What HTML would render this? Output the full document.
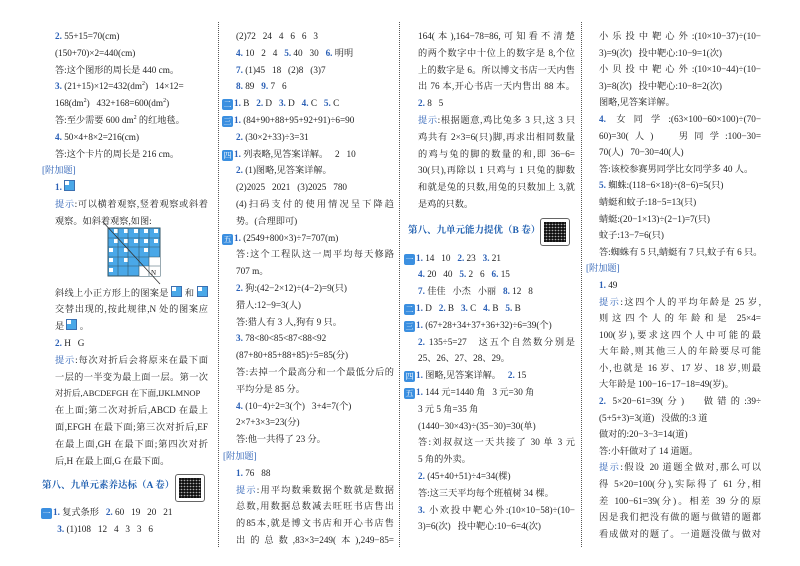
<!DOCTYPE html>
<html><head><meta charset="utf-8">
<style>
body{margin:0;width:800px;height:566px;background:#fff;overflow:hidden;position:relative;font-family:"Liberation Serif","Noto Serif CJK SC",serif;font-size:9.2px;color:#222;}
.col{position:absolute;}
.l{height:16.8px;line-height:16.8px;white-space:nowrap;overflow:visible;}
.j{text-align:justify;text-align-last:justify;white-space:normal;overflow:hidden;}
.c4 .l{height:16.6px;line-height:16.6px;}
.b{color:#2a5fb5;font-weight:bold;}
.t{color:#2a5fb5;}
.h{color:#2a5fb5;margin-left:-13px;}
.bd{display:inline-block;width:11px;height:11px;background:#3b8fe0;color:#fff;font-size:8px;line-height:11px;text-align:center;border-radius:2px;margin-left:-14px;margin-right:1px;vertical-align:-1px;}
.ttl{color:#1f5fb0;font-size:9.5px;font-weight:bold;margin-left:-13px;}
.qr{position:absolute;width:28px;height:26px;border:1px solid #666;border-radius:3px;background:#fff;}
.qr:after{content:"";position:absolute;left:3px;top:3px;width:22px;height:20px;background:repeating-linear-gradient(90deg,#444 0 2px,#bbb 2px 3px),repeating-linear-gradient(0deg,#444 0 2px,#eee 2px 3px);background-blend-mode:multiply;}
.vl{position:absolute;top:22px;height:525px;border-left:1px dotted #555;}
.ic{display:inline-block;width:9px;height:9px;border:1px solid #3b6fb0;background:#4aa8e8;vertical-align:-1px;position:relative;}
.ic:after{content:"";position:absolute;left:0;top:0;width:4px;height:4px;background:#fff;}
sup{font-size:6px;line-height:0;}
</style></head><body>
<div class="vl" style="left:218px"></div>
<div class="vl" style="left:399px"></div>
<div class="vl" style="left:581px"></div>

<div class="col" style="left:55px;top:28px;width:153px">
<div class="l"><span class="b">2.</span> 55+15=70(cm)</div>
<div class="l">(150+70)×2=440(cm)</div>
<div class="l">答:这个图形的周长是 440 cm。</div>
<div class="l"><span class="b">3.</span> (21+15)×12=432(dm<sup>2</sup>) &nbsp; 14×12=</div>
<div class="l">168(dm<sup>2</sup>) &nbsp; 432+168=600(dm<sup>2</sup>)</div>
<div class="l">答:至少需要 600 dm<sup>2</sup> 的红地毯。</div>
<div class="l"><span class="b">4.</span> 50×4+8×2=216(cm)</div>
<div class="l">答:这个卡片的周长是 216 cm。</div>
<div class="l h">[附加题]</div>
<div class="l"><span class="b">1.</span> <span class="ic"></span></div>
<div class="l j"><span class="t">提示</span>:可以横着观察,竖着观察或斜着</div>
<div class="l">观察。如斜着观察,如图:</div>
<div style="height:55px"></div>
<div class="l j">斜线上小正方形上的图案是 <span class="ic"></span> 和 <span class="ic"></span></div>
<div class="l j">交替出现的,按此规律,N 处的图案应</div>
<div class="l">是 <span class="ic"></span> 。</div>
<div class="l"><span class="b">2.</span> H &nbsp; G</div>
<div class="l j"><span class="t">提示</span>:每次对折后会将原来在最下面</div>
<div class="l j">一层的一半变为最上面一层。第一次</div>
<div class="l" style="font-size:8.5px">对折后,ABCDEFGH 在下面,IJKLMNOP</div>
<div class="l j">在上面;第二次对折后,ABCD 在最上</div>
<div class="l j">面,EFGH 在最下面;第三次对折后,EF</div>
<div class="l j">在最上面,GH 在最下面;第四次对折</div>
<div class="l">后,H 在最上面,G 在最下面。</div>
<div style="height:9px"></div>
<div class="l ttl">第八、九单元素养达标（A 卷）</div>
<div style="height:9px"></div>
<div class="l"><span class="bd">一</span><span class="b">1.</span> 复式条形 &nbsp; <span class="b">2.</span> 60 &nbsp; 19 &nbsp; 20 &nbsp; 21</div>
<div class="l">&nbsp;<span class="b">3.</span> (1)108 &nbsp; 12 &nbsp; 4 &nbsp; 3 &nbsp; 3 &nbsp; 6</div>
</div>
<div class="qr" style="left:175px;top:474px"></div>
<svg style="position:absolute;left:100px;top:220px" width="65" height="68">
<rect x="8" y="8" width="52" height="48" fill="#4aa8e8" stroke="#356"/>
<g fill="#fff">
<rect x="14" y="9" width="4" height="4"/><rect x="24" y="9" width="4" height="4"/><rect x="34" y="9" width="4" height="4"/><rect x="44" y="9" width="4" height="4"/><rect x="54" y="9" width="4" height="4"/>
<rect x="14" y="19" width="4" height="4"/><rect x="24" y="19" width="4" height="4"/><rect x="34" y="19" width="4" height="4"/><rect x="44" y="19" width="4" height="4"/><rect x="54" y="19" width="4" height="4"/>
<rect x="9" y="28" width="4" height="4"/><rect x="24" y="28" width="4" height="4"/><rect x="44" y="28" width="4" height="4"/>
<rect x="9" y="38" width="4" height="4"/><rect x="24" y="38" width="4" height="4"/><rect x="49" y="37" width="11" height="10"/>
<rect x="9" y="48" width="4" height="4"/><rect x="39" y="46" width="21" height="10"/>
</g>
<g stroke="#356" stroke-width="0.6"><line x1="18" y1="8" x2="18" y2="56"/><line x1="28" y1="8" x2="28" y2="56"/><line x1="39" y1="8" x2="39" y2="56"/><line x1="49" y1="8" x2="49" y2="56"/><line x1="8" y1="18" x2="60" y2="18"/><line x1="8" y1="27" x2="60" y2="27"/><line x1="8" y1="37" x2="60" y2="37"/><line x1="8" y1="46" x2="60" y2="46"/></g>
<line x1="3" y1="2" x2="60" y2="64" stroke="#333" stroke-width="0.8"/>
<text x="51" y="55" font-size="7" fill="#222">N</text>
</svg>

<div class="col" style="left:236px;top:28px;width:158px">
<div class="l">(2)72 &nbsp; 24 &nbsp; 4 &nbsp; 6 &nbsp; 6 &nbsp; 3</div>
<div class="l"><span class="b">4.</span> 10 &nbsp; 2 &nbsp; 4 &nbsp; <span class="b">5.</span> 40 &nbsp; 30 &nbsp; <span class="b">6.</span> 明明</div>
<div class="l"><span class="b">7.</span> (1)45 &nbsp; 18 &nbsp; (2)8 &nbsp; (3)7</div>
<div class="l"><span class="b">8.</span> 89 &nbsp; <span class="b">9.</span> 7 &nbsp; 6</div>
<div class="l"><span class="bd">二</span><span class="b">1.</span> B &nbsp; <span class="b">2.</span> D &nbsp; <span class="b">3.</span> D &nbsp; <span class="b">4.</span> C &nbsp; <span class="b">5.</span> C</div>
<div class="l"><span class="bd">三</span><span class="b">1.</span> (84+90+88+95+92+91)÷6=90</div>
<div class="l"><span class="b">2.</span> (30×2+33)÷3=31</div>
<div class="l"><span class="bd">四</span><span class="b">1.</span> 列表略,见答案详解。 &nbsp; 2 &nbsp; 10</div>
<div class="l"><span class="b">2.</span> (1)图略,见答案详解。</div>
<div class="l">(2)2025 &nbsp; 2021 &nbsp; (3)2025 &nbsp; 780</div>
<div class="l j">(4)扫码支付的使用情况呈下降趋</div>
<div class="l">势。(合理即可)</div>
<div class="l"><span class="bd">五</span><span class="b">1.</span> (2549+800×3)÷7=707(m)</div>
<div class="l j">答:这个工程队这一周平均每天修路</div>
<div class="l">707 m。</div>
<div class="l"><span class="b">2.</span> 狗:(42−2×12)÷(4−2)=9(只)</div>
<div class="l">猎人:12−9=3(人)</div>
<div class="l">答:猎人有 3 人,狗有 9 只。</div>
<div class="l"><span class="b">3.</span> 78&lt;80&lt;85&lt;87&lt;88&lt;92</div>
<div class="l">(87+80+85+88+85)÷5=85(分)</div>
<div class="l j">答:去掉一个最高分和一个最低分后的</div>
<div class="l">平均分是 85 分。</div>
<div class="l"><span class="b">4.</span> (10−4)÷2=3(个) &nbsp; 3+4=7(个)</div>
<div class="l">2×7+3×3=23(分)</div>
<div class="l">答:他一共得了 23 分。</div>
<div class="l h">[附加题]</div>
<div class="l"><span class="b">1.</span> 76 &nbsp; 88</div>
<div class="l j"><span class="t">提示</span>:用平均数乘数据个数就是数据</div>
<div class="l j">总数,用数据总数减去旺旺书店售出</div>
<div class="l j">的85本,就是博文书店和开心书店售</div>
<div class="l j">出的总数,83×3=249(本),249−85=</div>
</div>

<div class="col" style="left:418px;top:28px;width:157px">
<div class="l j">164(本),164−78=86,可知看不清楚</div>
<div class="l j">的两个数字中十位上的数字是 8,个位</div>
<div class="l j">上的数字是 6。所以博文书店一天内售</div>
<div class="l j">出 76 本,开心书店一天内售出 88 本。</div>
<div class="l"><span class="b">2.</span> 8 &nbsp; 5</div>
<div class="l j"><span class="t">提示</span>:根据题意,鸡比兔多 3 只,这 3 只</div>
<div class="l j">鸡共有 2×3=6(只)脚,再求出相同数量</div>
<div class="l j">的鸡与兔的脚的数量的和,即 36−6=</div>
<div class="l j">30(只),再除以 1 只鸡与 1 只兔的脚数</div>
<div class="l j">和就是兔的只数,用兔的只数加上 3,就</div>
<div class="l">是鸡的只数。</div>
<div style="height:10px"></div>
<div class="l ttl" style="margin-left:-10px">第八、九单元能力提优（B 卷）</div>
<div style="height:10px"></div>
<div class="l"><span class="bd">一</span><span class="b">1.</span> 14 &nbsp; 10 &nbsp; <span class="b">2.</span> 23 &nbsp; <span class="b">3.</span> 21</div>
<div class="l"><span class="b">4.</span> 20 &nbsp; 40 &nbsp; <span class="b">5.</span> 2 &nbsp; 6 &nbsp; <span class="b">6.</span> 15</div>
<div class="l"><span class="b">7.</span> 佳佳 &nbsp; 小杰 &nbsp; 小丽 &nbsp; <span class="b">8.</span> 12 &nbsp; 8</div>
<div class="l"><span class="bd">二</span><span class="b">1.</span> D &nbsp; <span class="b">2.</span> B &nbsp; <span class="b">3.</span> C &nbsp; <span class="b">4.</span> B &nbsp; <span class="b">5.</span> B</div>
<div class="l"><span class="bd">三</span><span class="b">1.</span> (67+28+34+37+36+32)÷6=39(个)</div>
<div class="l j"><span class="b">2.</span> 135÷5=27 &nbsp; 这五个自然数分别是</div>
<div class="l">25、26、27、28、29。</div>
<div class="l"><span class="bd">四</span><span class="b">1.</span> 图略,见答案详解。 &nbsp; <span class="b">2.</span> 15</div>
<div class="l"><span class="bd">五</span><span class="b">1.</span> 144 元=1440 角 &nbsp; 3 元=30 角</div>
<div class="l">3 元 5 角=35 角</div>
<div class="l">(1440−30×43)÷(35−30)=30(单)</div>
<div class="l j">答:刘叔叔这一天共接了 30 单 3 元</div>
<div class="l">5 角的外卖。</div>
<div class="l"><span class="b">2.</span> (45+40+51)÷4=34(棵)</div>
<div class="l">答:这三天平均每个班植树 34 棵。</div>
<div class="l j"><span class="b">3.</span> 小欢投中靶心外:(10×10−58)÷(10−</div>
<div class="l">3)=6(次) &nbsp; 投中靶心:10−6=4(次)</div>
</div>
<div class="qr" style="left:540px;top:218px"></div>

<div class="col c4" style="left:599px;top:28px;width:162px">
<div class="l j">小乐投中靶心外:(10×10−37)÷(10−</div>
<div class="l">3)=9(次) &nbsp; 投中靶心:10−9=1(次)</div>
<div class="l j">小贝投中靶心外:(10×10−44)÷(10−</div>
<div class="l">3)=8(次) &nbsp; 投中靶心:10−8=2(次)</div>
<div class="l">图略,见答案详解。</div>
<div class="l j"><span class="b">4.</span> 女同学:(63×100−60×100)÷(70−</div>
<div class="l j">60)=30(人) &nbsp; 男同学:100−30=</div>
<div class="l">70(人) &nbsp; 70−30=40(人)</div>
<div class="l">答:该校参赛男同学比女同学多 40 人。</div>
<div class="l"><span class="b">5.</span> 蜘蛛:(118−6×18)÷(8−6)=5(只)</div>
<div class="l">蜻蜓和蚊子:18−5=13(只)</div>
<div class="l">蜻蜓:(20−1×13)÷(2−1)=7(只)</div>
<div class="l">蚊子:13−7=6(只)</div>
<div class="l">答:蜘蛛有 5 只,蜻蜓有 7 只,蚊子有 6 只。</div>
<div class="l h">[附加题]</div>
<div class="l"><span class="b">1.</span> 49</div>
<div class="l j"><span class="t">提示</span>:这四个人的平均年龄是 25 岁,</div>
<div class="l j">则这四个人的年龄和是 25×4=</div>
<div class="l j">100(岁),要求这四个人中可能的最</div>
<div class="l j">大年龄,则其他三人的年龄要尽可能</div>
<div class="l j">小,也就是 16 岁、17 岁、18 岁,则最</div>
<div class="l">大年龄是 100−16−17−18=49(岁)。</div>
<div class="l j"><span class="b">2.</span> 5×20−61=39(分) &nbsp; 做错的:39÷</div>
<div class="l">(5+5+3)=3(道) &nbsp; 没做的:3 道</div>
<div class="l">做对的:20−3−3=14(道)</div>
<div class="l">答:小轩做对了 14 道题。</div>
<div class="l j"><span class="t">提示</span>:假设 20 道题全做对,那么可以</div>
<div class="l j">得 5×20=100(分),实际得了 61 分,相</div>
<div class="l j">差 100−61=39(分)。相差 39 分的原</div>
<div class="l j">因是我们把没有做的题与做错的题都</div>
<div class="l j">看成做对的题了。一道题没做与做对</div>
</div>
</body></html>
